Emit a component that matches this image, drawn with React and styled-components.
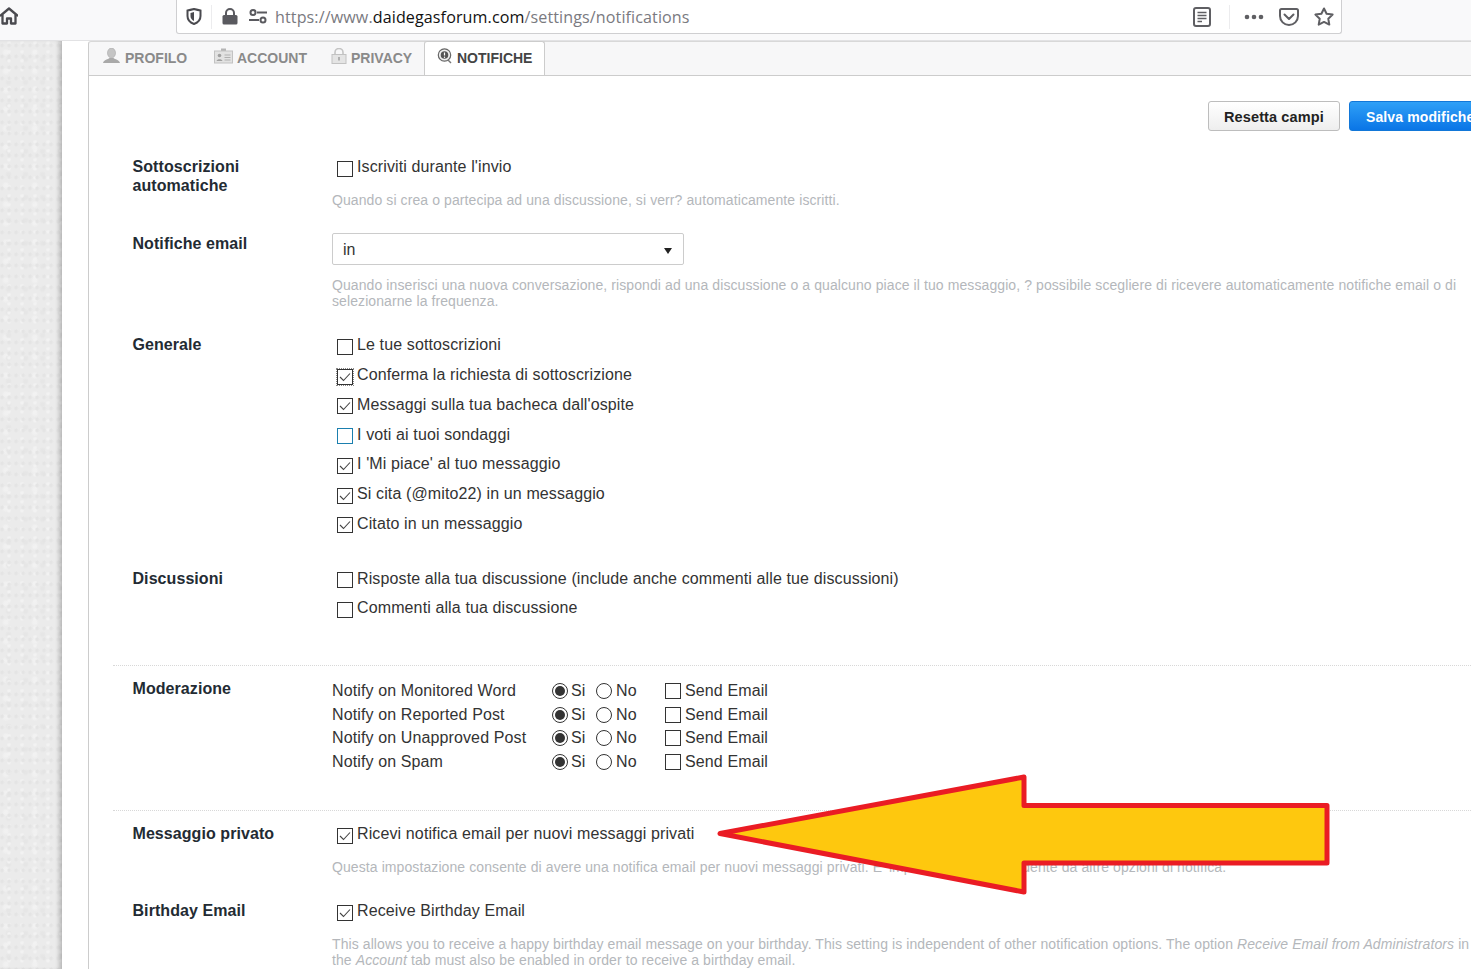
import React from "react";
import styled, { createGlobalStyle } from "styled-components";

const Global = createGlobalStyle`
  html, body { margin: 0; padding: 0; background: #fff; }
  body { font-family: "Liberation Sans", Arial, sans-serif; color: #333; }
`;

const Page = styled.div`
  position: relative;
  width: 1471px;
  height: 969px;
  overflow: hidden;
`;

const BrowserBar = styled.div`
  height: 40px;
  background: #f9f9fa;
  border-bottom: 1px solid #e2e2e4;
  display: flex;
  align-items: flex-start;
  padding-left: 1px;
`;

const HomeBtn = styled.div`
  width: 175px;
  height: 32px;
  display: flex;
  align-items: center;
  color: #4a4a4f;
`;

const UrlBox = styled.div`
  width: 1164px;
  height: 33px;
  background: #fff;
  border: 1px solid #cfcfd1;
  border-top: none;
  border-radius: 0 0 3px 3px;
  display: flex;
  align-items: center;
  color: #5a5a5f;
`;

const UrlIcon = styled.span`
  display: flex;
  margin-left: ${p => p.$left || 0}px;
`;

const Sep = styled.span`
  width: 1px;
  height: 24px;
  background: #ececee;
  margin-left: ${p => p.$left}px;
`;

const UrlText = styled.span`
  margin-left: 8px;
  width: 902px;
  font-family: "Open Sans", sans-serif;
  font-size: 16.1px;
  letter-spacing: 0.1px;
  color: #7a7a7f;
  white-space: nowrap;
  b { font-weight: 400; color: #111; }
`;

const Body = styled.div`
  display: flex;
  height: 928px;
`;

const Gutter = styled.div`
  flex: 0 0 62px;
  background-color: #ebebeb;
  background-image:
    radial-gradient(circle at 30% 40%, #e4e4e4 1px, transparent 2.5px),
    radial-gradient(circle at 70% 20%, #f2f2f2 1px, transparent 2.5px),
    radial-gradient(circle at 50% 80%, #e6e6e6 1.5px, transparent 3.5px),
    radial-gradient(circle at 20% 60%, #f1f1f1 1.5px, transparent 4px);
  background-size: 7px 11px, 13px 9px, 17px 23px, 29px 19px;
  box-shadow: inset -5px 0 5px -3px rgba(0, 0, 0, 0.28);
`;

const Main = styled.div`
  flex: 1;
  padding-left: 26px;
  min-width: 0;
`;

const TabBar = styled.div`
  height: 33px;
  display: flex;
  background: #f7f7f8;
  border-top: 1px solid #d8d8d8;
  border-left: 1px solid #ccc;
  border-bottom: 1px solid #ccc;
  border-top-left-radius: 3px;
`;

const Tab = styled.div`
  width: ${p => p.$w}px;
  height: ${p => (p.$active ? 34 : 33)}px;
  margin-top: ${p => (p.$active ? -1 : 0)}px;
  box-sizing: border-box;
  padding: 0 0 2px ${p => p.$pad}px;
  display: flex;
  align-items: center;
  gap: 4px;
  font-size: 14px;
  font-weight: bold;
  color: ${p => (p.$active ? "#444" : "#8a8a8a")};
  background: ${p => (p.$active ? "#fff" : "transparent")};
  border: ${p => (p.$active ? "1px solid #ccc" : "none")};
  border-bottom: none;
  border-radius: ${p => (p.$active ? "3px 3px 0 0" : "0")};
  svg { margin-top: -4px; }
`;

const Panel = styled.div`
  border-left: 1px solid #ccc;
  height: 900px;
  padding-left: 24px;
`;

const Actions = styled.div`
  display: flex;
  gap: 9px;
  padding: 25px 0 25px 1095px;
  width: 400px;
`;

const Button = styled.div`
  flex: none;
  box-sizing: border-box;
  height: 30px;
  width: ${p => p.$w}px;
  padding-left: ${p => p.$pad}px;
  border-radius: 3px;
  font-size: ${p => (p.$primary ? 14 : 14.5)}px;
  letter-spacing: 0.12px;
  font-weight: bold;
  line-height: 30px;
  white-space: nowrap;
  overflow: hidden;
  color: ${p => (p.$primary ? "#fff" : "#222")};
  background: ${p => (p.$primary
    ? "linear-gradient(#2fa0f7, #0a75e6)"
    : "linear-gradient(#fff, #eee)")};
  border: 1px solid ${p => (p.$primary ? "#1277d8" : "#bdbdbd")};
`;

const Section = styled.div`
  display: flex;
  margin-bottom: ${p => p.$after ?? 25}px;
  padding-left: 19.5px;
`;

const Label = styled.div`
  flex: 0 0 199.5px;
  box-sizing: border-box;
  padding-top: ${p => p.$top ?? 1}px;
  font-size: 16px;
  font-weight: bold;
  letter-spacing: 0.07px;
  line-height: 19px;
  color: #232b33;
`;

const Field = styled.div`
  width: 1140px;
`;

const CheckRow = styled.div`
  display: flex;
  box-sizing: border-box;
  height: 29.72px;
  padding: 1.45px 0 0 5px;
  font-size: 16px;
  letter-spacing: 0.12px;
  line-height: 20px;
  color: #333;
`;

const Box = styled.span`
  flex: none;
  box-sizing: border-box;
  width: 16px;
  height: 16px;
  margin: 3.55px 4px 0 0;
  background: #fff;
  border: 1px solid ${p => (p.$focus ? "#1b7fae" : "#333")};
  outline: ${p => (p.$dotted ? "1px dotted #888" : "none")};
  display: flex;
  align-items: center;
  justify-content: center;
`;

const Help = styled.div`
  margin-top: ${p => p.$top ?? 6.28}px;
  font-size: 14px;
  letter-spacing: 0.09px;
  line-height: 16px;
  color: #b4b7bb;
`;

const Select = styled.div`
  position: relative;
  box-sizing: border-box;
  width: 352px;
  height: 32px;
  padding-left: 10px;
  border: 1px solid #ccc;
  border-radius: 2px;
  font-size: 16px;
  line-height: 32px;
  color: #333;
  &::after {
    content: "";
    position: absolute;
    right: 11px;
    top: 14px;
    border: 4.5px solid transparent;
    border-top: 6px solid #222;
    border-bottom: none;
  }
`;

const Divider = styled.div`
  border-top: 1px dotted #d8d8d8;
  margin: ${p => p.$before}px 0 12px;
`;

const ModGrid = styled.div`
  padding-top: 1.6px;
`;

const ModRow = styled.div`
  display: flex;
  align-items: center;
  height: 23.6px;
  font-size: 16px;
  letter-spacing: 0.12px;
  color: #333;
`;

const ModName = styled.span`
  flex: 0 0 220px;
`;

const Choice = styled.span`
  display: flex;
  align-items: center;
  flex: 0 0 ${p => p.$w}px;
`;

const Radio = styled.span`
  box-sizing: border-box;
  width: 16px;
  height: 16px;
  margin-right: ${p => (p.$on ? 3 : 4)}px;
  border: 1px solid #333;
  border-radius: 50%;
  display: flex;
  align-items: center;
  justify-content: center;
  &::after {
    content: "";
    width: 10px;
    height: 10px;
    border-radius: 50%;
    background: ${p => (p.$on ? "#333" : "transparent")};
  }
`;

const ModBox = styled(Box)`
  margin: 0 4px 0 0;
`;

const Arrow = styled.svg`
  position: absolute;
  left: 0;
  top: 0;
  pointer-events: none;
`;

const Check = () => (
  <svg width="12" height="10" viewBox="0 0 12 10">
    <path d="M1 5 L4.5 8.5 L11 1.5" fill="none" stroke="#444" strokeWidth="1.1" />
  </svg>
);

const CheckItem = ({ text, on, focus, dotted }) => (
  <CheckRow>
    <Box $focus={focus} $dotted={dotted}>{on && <Check />}</Box>
    {text}
  </CheckRow>
);

const ModItem = ({ name }) => (
  <ModRow>
    <ModName>{name}</ModName>
    <Choice $w={44}><Radio $on />Si</Choice>
    <Choice $w={69}><Radio />No</Choice>
    <ModBox />Send Email
  </ModRow>
);

const HomeIcon = () => (
  <svg width="18" height="18" viewBox="0 0 18 18" fill="none" stroke="currentColor" strokeWidth="2.3" style={{ marginLeft: -1 }}>
    <path d="M0 9 L9 1.5 L18 9" strokeLinejoin="round" />
    <path d="M2.5 7.5 V16.5 H7 V11.5 H11 V16.5 H15.5 V7.5" strokeLinejoin="round" />
  </svg>
);

const ShieldIcon = () => (
  <svg width="16" height="17" viewBox="0 0 16 17">
    <path d="M1.5 2.5 C4 2 6 1.5 8 1 C10 1.5 12 2 14.5 2.5 V8 C14.5 12 11.5 14.8 8 16 C4.5 14.8 1.5 12 1.5 8 Z" fill="none" stroke="#4a4a4f" strokeWidth="2" />
    <path d="M8 4 V13 C6 12 4.5 10.5 4.5 8 V5 Z" fill="#4a4a4f" />
  </svg>
);

const LockIcon = () => (
  <svg width="16" height="17" viewBox="0 0 16 17">
    <path d="M4 7 V5 a4 4 0 0 1 8 0 V7" fill="none" stroke="#5a5a5f" strokeWidth="2" />
    <rect x="0.5" y="7" width="15" height="9.5" rx="1.5" fill="#5a5a5f" />
  </svg>
);

const SlidersIcon = () => (
  <svg width="18" height="15" viewBox="0 0 18 15" fill="none" stroke="#5a5a5f" strokeWidth="2">
    <circle cx="4" cy="3.5" r="2.5" />
    <path d="M8 3.5 H18" />
    <path d="M0 11 H10" />
    <circle cx="14" cy="11" r="2.5" />
  </svg>
);

const ReaderIcon = () => (
  <svg width="18" height="20" viewBox="0 0 18 20" fill="none" stroke="#5f5f63">
    <rect x="1" y="1" width="16" height="18" rx="2" strokeWidth="2" />
    <path d="M4.5 5.5 H13.5 M4.5 8.5 H13.5 M4.5 11.5 H13.5 M4.5 14.5 H9" strokeWidth="1.4" />
  </svg>
);

const DotsIcon = () => (
  <svg width="20" height="6" viewBox="0 0 20 6" fill="#5f5f63">
    <circle cx="3" cy="3" r="2.3" />
    <circle cx="10" cy="3" r="2.3" />
    <circle cx="17" cy="3" r="2.3" />
  </svg>
);

const PocketIcon = () => (
  <svg width="20" height="18" viewBox="0 0 20 18" fill="none" stroke="#5f5f63" strokeWidth="2">
    <path d="M2.5 1 H17.5 A1.5 1.5 0 0 1 19 2.5 V8 A9 9 0 0 1 1 8 V2.5 A1.5 1.5 0 0 1 2.5 1 Z" />
    <path d="M5.5 6.5 L10 11 L14.5 6.5" strokeLinecap="round" strokeLinejoin="round" />
  </svg>
);

const StarIcon = () => (
  <svg width="20" height="19" viewBox="0 0 20 19" fill="none" stroke="#5f5f63" strokeWidth="2" strokeLinejoin="round">
    <path d="M10 1.5 L12.6 6.8 L18.6 7.6 L14.3 11.8 L15.3 17.6 L10 14.9 L4.7 17.6 L5.7 11.8 L1.4 7.6 L7.4 6.8 Z" />
  </svg>
);

const PersonIcon = () => (
  <svg width="19" height="16" viewBox="0 0 19 16">
    <ellipse cx="9.5" cy="5" rx="4" ry="5" fill="#c4c4c4" stroke="#a8a8a8" strokeWidth="0.6" />
    <path d="M1 15 C2 11.5 6 11.5 7.5 10 H11.5 C13 11.5 17 11.5 18 15 Z" fill="#a9a9a9" />
  </svg>
);

const CardIcon = () => (
  <svg width="19" height="16" viewBox="0 0 19 16">
    <rect x="7" y="0.5" width="5" height="4" fill="#b5b5b5" />
    <rect x="0.5" y="3" width="18" height="12" fill="#e2e2e2" stroke="#c2c2c2" />
    <circle cx="5.5" cy="7.5" r="1.8" fill="#a0a0a0" />
    <path d="M2.5 13 C3 10.5 8 10.5 8.5 13 Z" fill="#a0a0a0" />
    <path d="M10.5 7 H16.5 M10.5 9.5 H16.5 M10.5 12 H16.5" stroke="#b0b0b0" />
  </svg>
);

const PadlockIcon = () => (
  <svg width="16" height="16" viewBox="0 0 16 16">
    <path d="M4 7 V4.5 a4 4 0 0 1 8 0 V7" fill="none" stroke="#c4c4c4" strokeWidth="1.6" />
    <rect x="1" y="6.5" width="14" height="9" fill="#e4e4e4" stroke="#c2c2c2" />
    <rect x="7" y="9" width="2" height="3.5" fill="#b0b0b0" />
  </svg>
);

const BubbleIcon = () => (
  <svg width="16" height="16" viewBox="0 0 16 16">
    <circle cx="7.5" cy="7" r="6.2" fill="#eee" stroke="#666" strokeWidth="1.2" />
    <circle cx="7.5" cy="7" r="3.8" fill="#555" />
    <path d="M7.5 4.5 V7.5" stroke="#fff" strokeWidth="1.2" />
    <circle cx="7.5" cy="9.2" r="0.7" fill="#fff" />
    <path d="M11 12 L14 15" stroke="#777" strokeWidth="1.4" />
  </svg>
);

const App = () => (
  <Page>
    <Global />
    <BrowserBar>
      <HomeBtn><HomeIcon /></HomeBtn>
      <UrlBox>
        <UrlIcon $left={9}><ShieldIcon /></UrlIcon>
        <Sep $left={9} />
        <UrlIcon $left={10}><LockIcon /></UrlIcon>
        <UrlIcon $left={11}><SlidersIcon /></UrlIcon>
        <UrlText>https://www.<b>daidegasforum.com</b>/settings/notifications</UrlText>
        <UrlIcon $left={16}><ReaderIcon /></UrlIcon>
        <Sep $left={18} />
        <UrlIcon $left={14}><DotsIcon /></UrlIcon>
        <UrlIcon $left={15}><PocketIcon /></UrlIcon>
        <UrlIcon $left={15}><StarIcon /></UrlIcon>
      </UrlBox>
    </BrowserBar>
    <Body>
      <Gutter />
      <Main>
        <TabBar>
          <Tab $w={117} $pad={13}><PersonIcon />PROFILO</Tab>
          <Tab $w={117} $pad={8}><CardIcon />ACCOUNT</Tab>
          <Tab $w={101} $pad={8}><PadlockIcon />PRIVACY</Tab>
          <Tab $active $w={121} $pad={12}><BubbleIcon />NOTIFICHE</Tab>
        </TabBar>
        <Panel>
          <Actions>
            <Button $w={132} $pad={15}>Resetta campi</Button>
            <Button $primary $w={135} $pad={16}>Salva modifiche</Button>
          </Actions>

          <Section>
            <Label>Sottoscrizioni<br />automatiche</Label>
            <Field>
              <CheckItem text="Iscriviti durante l'invio" />
              <Help>Quando si crea o partecipa ad una discussione, si verr? automaticamente iscritti.</Help>
            </Field>
          </Section>

          <Section>
            <Label>Notifiche email</Label>
            <Field>
              <Select>in</Select>
              <Help $top={12}>Quando inserisci una nuova conversazione, rispondi ad una discussione o a qualcuno piace il tuo messaggio, ? possibile scegliere di ricevere automaticamente notifiche email o di selezionarne la frequenza.</Help>
            </Field>
          </Section>

          <Section $after={25.3}>
            <Label>Generale</Label>
            <Field>
              <CheckItem text="Le tue sottoscrizioni" />
              <CheckItem on dotted text="Conferma la richiesta di sottoscrizione" />
              <CheckItem on text="Messaggi sulla tua bacheca dall'ospite" />
              <CheckItem focus text="I voti ai tuoi sondaggi" />
              <CheckItem on text="I 'Mi piace' al tuo messaggio" />
              <CheckItem on text="Si cita (@mito22) in un messaggio" />
              <CheckItem on text="Citato in un messaggio" />
            </Field>
          </Section>

          <Section $after={0}>
            <Label $top={1.4}>Discussioni</Label>
            <Field>
              <CheckItem text="Risposte alla tua discussione (include anche commenti alle tue discussioni)" />
              <CheckItem text="Commenti alla tua discussione" />
            </Field>
          </Section>

          <Divider $before={38.1} />

          <Section $after={0}>
            <Label>Moderazione</Label>
            <ModGrid>
              <ModItem name="Notify on Monitored Word" />
              <ModItem name="Notify on Reported Post" />
              <ModItem name="Notify on Unapproved Post" />
              <ModItem name="Notify on Spam" />
            </ModGrid>
          </Section>

          <Divider $before={36} />

          <Section>
            <Label>Messaggio privato</Label>
            <Field>
              <CheckItem on text="Ricevi notifica email per nuovi messaggi privati" />
              <Help>Questa impostazione consente di avere una notifica email per nuovi messaggi privati. E' impostazione indipendente da altre opzioni di notifica.</Help>
            </Field>
          </Section>

          <Section>
            <Label>Birthday Email</Label>
            <Field>
              <CheckItem on text="Receive Birthday Email" />
              <Help>This allows you to receive a happy birthday email message on your birthday. This setting is independent of other notification options. The option <em>Receive Email from Administrators</em> in the <em>Account</em> tab must also be enabled in order to receive a birthday email.</Help>
            </Field>
          </Section>
        </Panel>
      </Main>
    </Body>
    <Arrow width="1471" height="969" viewBox="0 0 1471 969">
      <path
        d="M720 833.5 L1024 777 V805.5 H1327 V863 H1024 V892 Z"
        fill="#fec80e"
        stroke="#ea1c24"
        strokeWidth="5"
        strokeLinejoin="round"
      />
    </Arrow>
  </Page>
);

export default App;
